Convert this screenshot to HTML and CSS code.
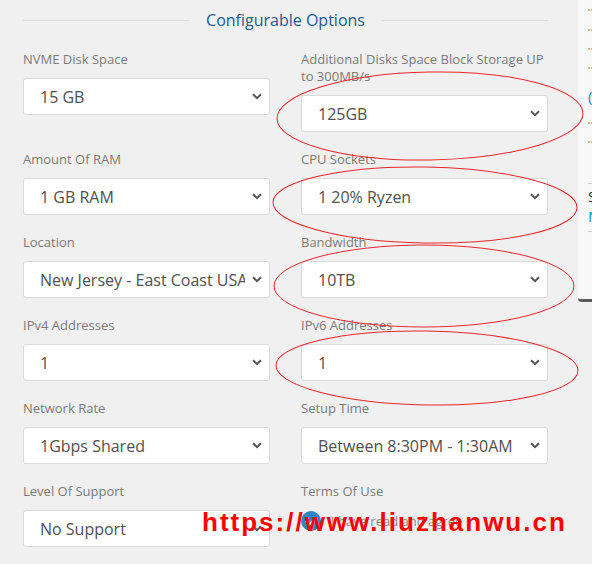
FILE: index.html
```html
<!DOCTYPE html>
<html>
<head>
	<title>Configurable Options</title>
	<link rel="stylesheet" href="styles.css">
</head>
<body>
	<div class="page">
		<div class="options">
			<div class="options-title">
				<span class="rule"></span>
				<span class="title-text">Configurable Options</span>
				<span class="rule"></span>
			</div>
			<div class="option-grid">
				<div class="field">
					<label>NVME Disk Space</label>
					<select><option>15 GB</option></select>
				</div>
				<div class="field">
					<label>Additional Disks Space Block Storage UP to 300MB/s</label>
					<select><option>125GB</option></select>
				</div>
				<div class="field">
					<label>Amount Of RAM</label>
					<select><option>1 GB RAM</option></select>
				</div>
				<div class="field">
					<label>CPU Sockets</label>
					<select><option>1 20% Ryzen</option></select>
				</div>
				<div class="field">
					<label>Location</label>
					<select><option>New Jersey - East Coast USA</option></select>
				</div>
				<div class="field">
					<label>Bandwidth</label>
					<select><option>10TB</option></select>
				</div>
				<div class="field">
					<label>IPv4 Addresses</label>
					<select><option>1</option></select>
				</div>
				<div class="field">
					<label>IPv6 Addresses</label>
					<select><option>1</option></select>
				</div>
				<div class="field">
					<label>Network Rate</label>
					<select><option>1Gbps Shared</option></select>
				</div>
				<div class="field">
					<label>Setup Time</label>
					<select><option>Between 8:30PM - 1:30AM</option></select>
				</div>
				<div class="field">
					<label>Level Of Support</label>
					<select><option>No Support</option></select>
				</div>
				<div class="field">
					<label>Terms Of Use</label>
					<div class="agree">
						<span class="check">
							<svg width="12" height="10" viewBox="0 0 12 10"><path d="M1 5 L4.5 8.5 L11 1.5" fill="none" stroke="#fff" stroke-width="2"/></svg>
						</span>
						<span>I have read and agree</span>
					</div>
				</div>
			</div>
		</div>
		<div class="sidebar">
			<div class="dots"></div>
			<div class="dots gap-big"></div>
			<div class="dots"></div>
			<div class="dots"></div>
			<div class="side-link">(</div>
			<div class="dots gap-big"></div>
			<div class="dots"></div>
			<div class="side-block">
				<div class="side-strong">S</div>
				<div class="side-link">M</div>
			</div>
		</div>
	</div>

	<svg class="marks" width="592" height="564" viewBox="0 0 592 564">
		<ellipse cx="430" cy="116" rx="153" ry="44" transform="rotate(-1 430 116)"/>
		<ellipse cx="425" cy="205" rx="152" ry="38" transform="rotate(1 425 205)"/>
		<ellipse cx="424" cy="286" rx="150" ry="41"/>
		<ellipse cx="427" cy="368" rx="151" ry="37" transform="rotate(1 427 368)"/>
	</svg>
	<div class="watermark">https://www.liuzhanwu.cn</div>
</body>
</html>
```

FILE: styles.css
```css
body{
	margin: 0;
	width: 592px;
	height: 564px;
	overflow: hidden;
	background: #f0f0f0;
	font-family: 'Open Sans', 'Liberation Sans', sans-serif;
	color: #555;
}
.page{
	display: flex;
	align-items: flex-start;
}
.options{
	width: 578px;
	flex-shrink: 0;
	box-sizing: border-box;
	padding: 8px 30px 0 23px;
}
.options-title{
	display: flex;
	align-items: center;
	gap: 17px;
	margin-bottom: 19px;
}
.rule{
	flex: 1;
	height: 1px;
	background: #dcdcdc;
}
.title-text{
	font-size: 16px;
	line-height: 24px;
	color: #1d5b8c;
}
.option-grid{
	display: grid;
	grid-template-columns: 1fr 1fr;
	column-gap: 31px;
}
.field label{
	display: block;
	font-size: 13px;
	line-height: 17px;
	color: #7b7b7b;
	margin-bottom: 10px;
	padding-top: 1px;
	margin-top: -1px;
}
.field select{
	display: block;
	width: 100%;
	height: 37px;
	margin-bottom: 19px;
	padding: 0 24px 0 16px;
	-webkit-appearance: none;
	appearance: none;
	background: #fff url("data:image/svg+xml,%3Csvg xmlns='http://www.w3.org/2000/svg' width='10' height='7' viewBox='0 0 10 7'%3E%3Cpath d='M1 1.2 L5 5.2 L9 1.2' fill='none' stroke='%23555' stroke-width='2'/%3E%3C/svg%3E") no-repeat right 7px center;
	border: 1px solid #dadada;
	border-radius: 3px;
	font-family: 'Open Sans', sans-serif;
	font-size: 16px;
	color: #505050;
	outline: 0;
}
.agree{
	display: flex;
	align-items: center;
	gap: 10px;
	font-size: 13px;
	color: #888;
	padding-top: 1px;
}
.check{
	width: 20px;
	height: 20px;
	border-radius: 50%;
	background: #2b87c9;
	display: flex;
	align-items: center;
	justify-content: center;
}
.sidebar{
	width: 220px;
	flex-shrink: 0;
	height: 302px;
	box-sizing: border-box;
	padding: 9px 0 0 10px;
	background: #f8f8f8;
	border-bottom: 3px solid #5a5a5a;
	border-bottom-left-radius: 4px;
	font-size: 15px;
}
.dots{
	width: 40px;
	height: 2px;
	margin-bottom: 15px;
	border-top: 2px dotted #e8b878;
}
.gap-big{
	margin-top: 16px;
}
.side-link{
	color: #2b87c9;
	line-height: 20px;
	margin-bottom: 14px;
}
.side-block{
	margin-top: 38px;
	border-top: 1px solid #cfcfcf;
	border-bottom: 1px solid #cfcfcf;
	padding: 3px 0 5px;
	line-height: 19px;
}
.side-block .side-link{
	margin-bottom: 0;
}
.side-strong{
	color: #333;
}
.marks{
	position: absolute;
	top: 0;
	left: 0;
	pointer-events: none;
}
.marks ellipse{
	fill: none;
	stroke: #e8262b;
	stroke-width: 1;
}
.watermark{
	position: absolute;
	left: 202px;
	top: 507px;
	font-family: 'Liberation Sans', sans-serif;
	font-weight: bold;
	font-size: 26px;
	line-height: 30px;
	letter-spacing: 2px;
	color: #ff0000;
}
```
